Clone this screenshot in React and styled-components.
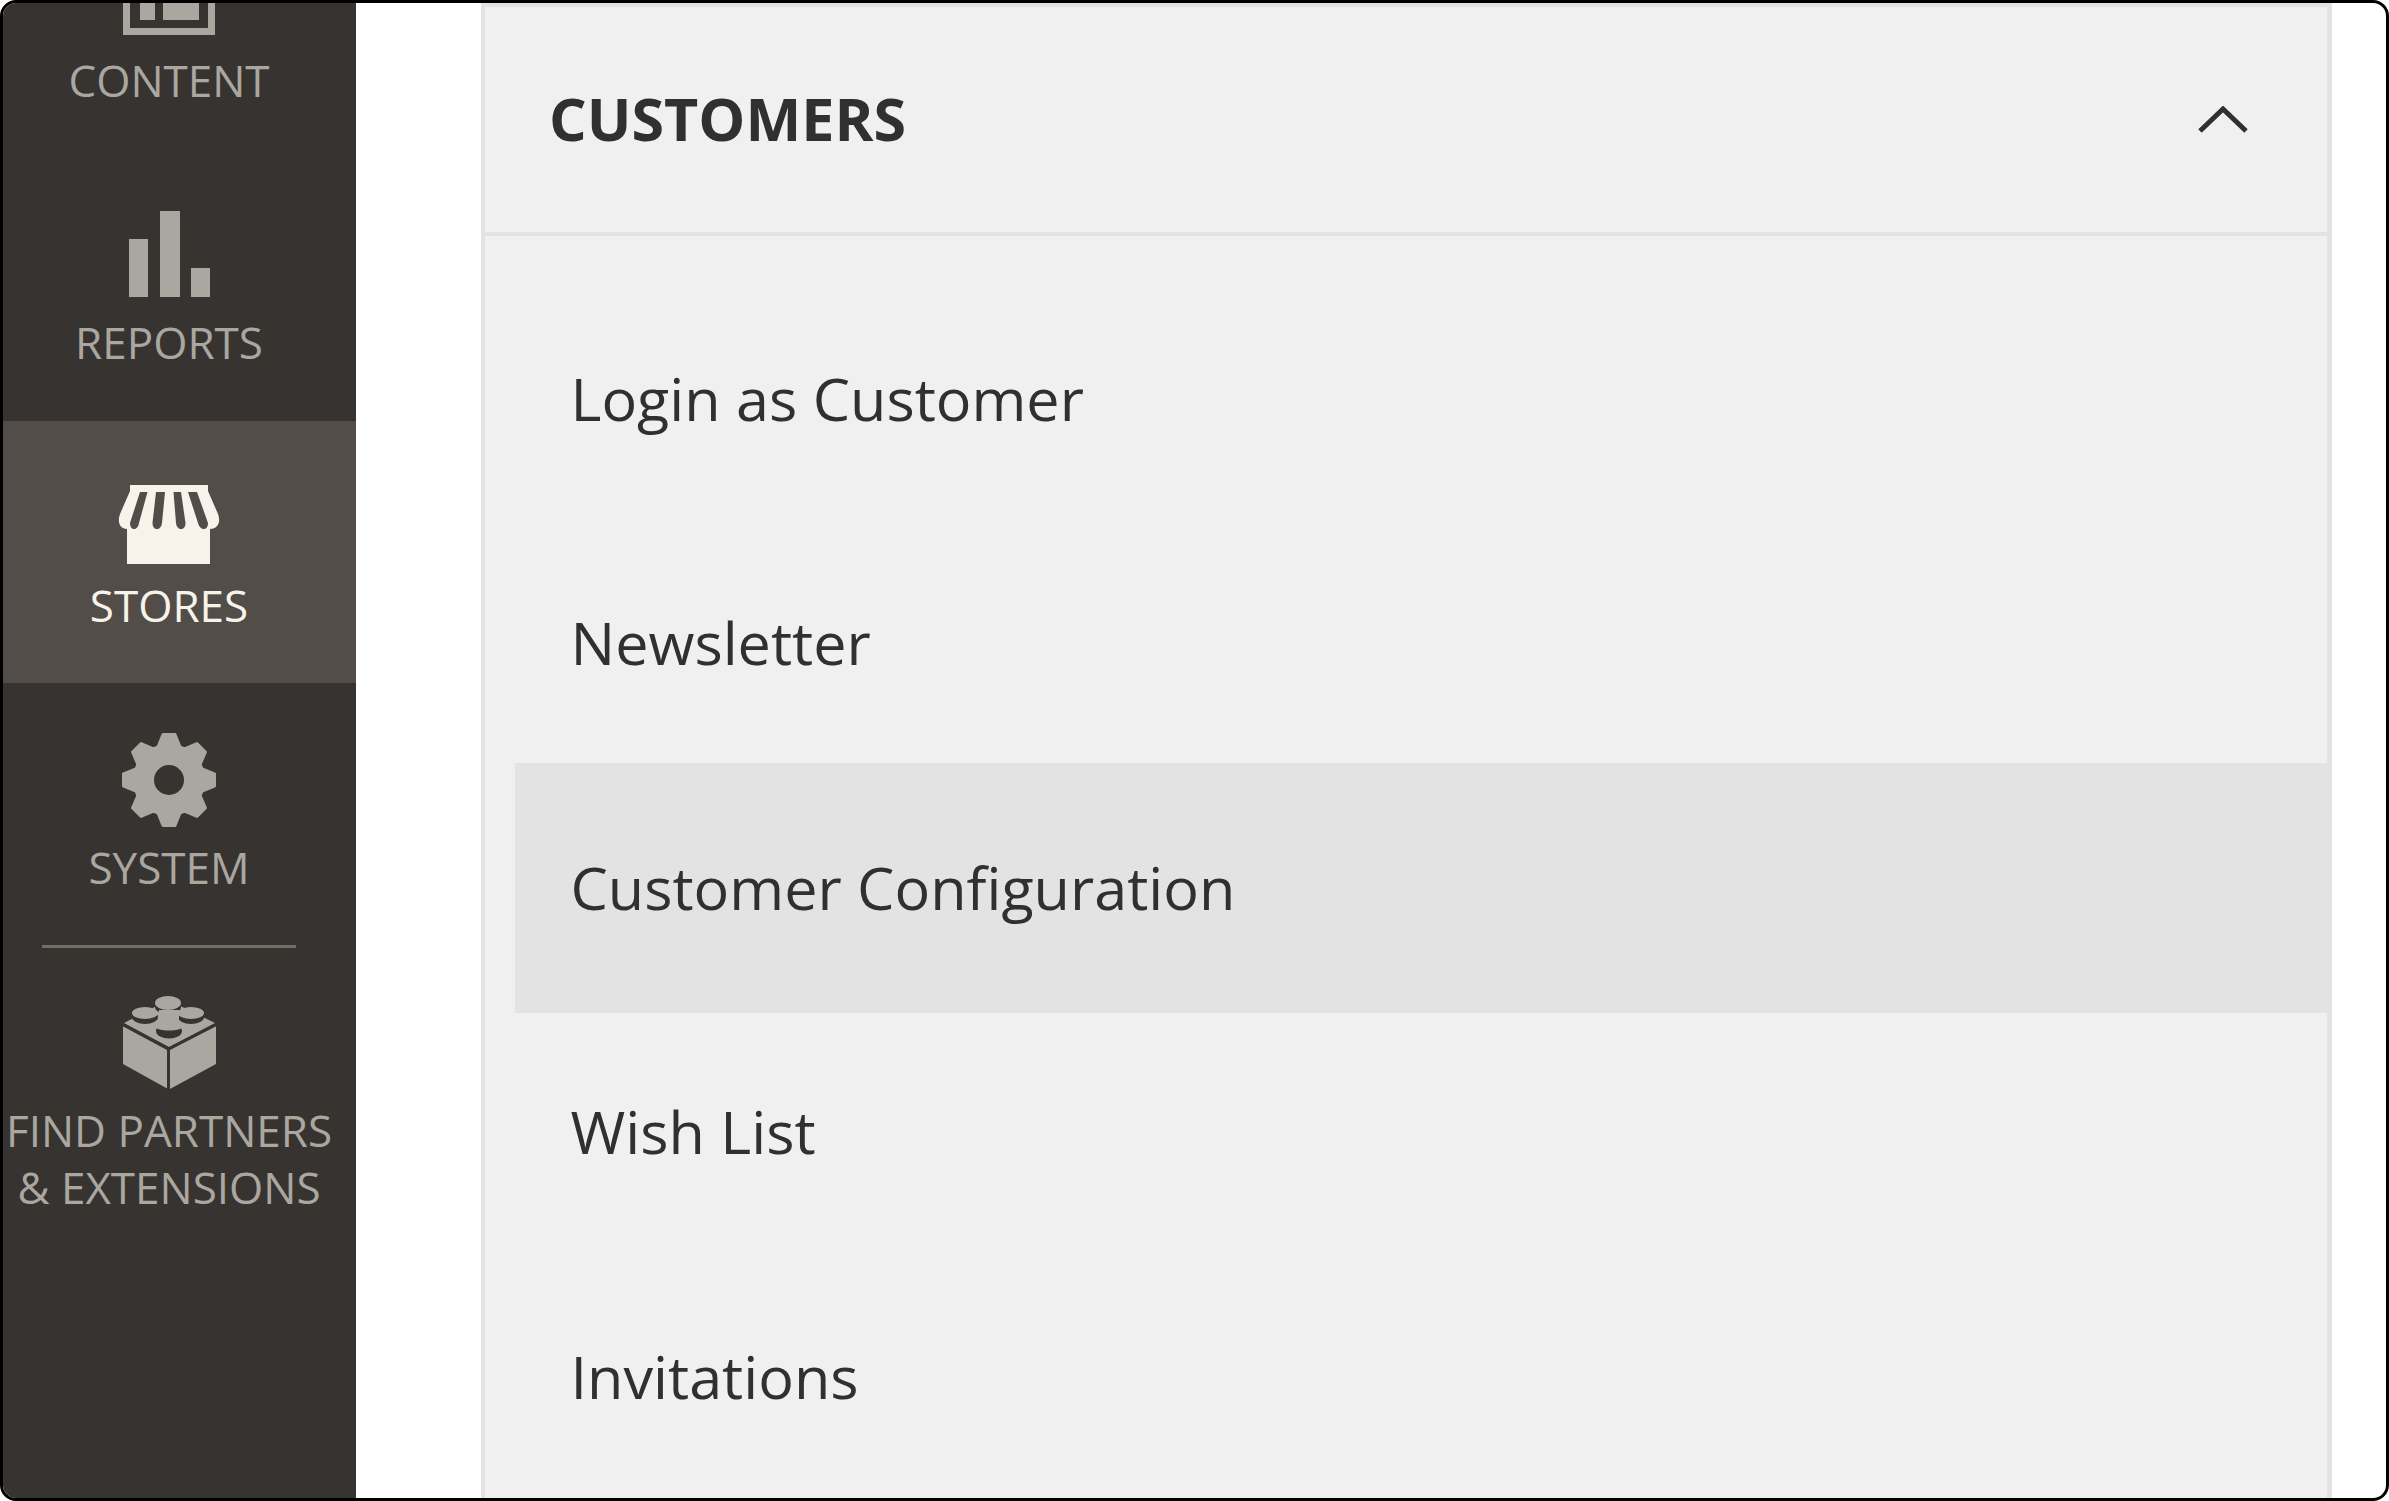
import styled, { createGlobalStyle } from "styled-components";

const GlobalStyle = createGlobalStyle`
  html, body {
    margin: 0;
    padding: 0;
    background: #fff;
  }
`;

const gearPath = () => {
  const cx = 47;
  const cy = 47;
  const pts = [];
  for (let i = 0; i < 8; i++) {
    const a = (i * Math.PI) / 4 - Math.PI / 2;
    const at = (r, off) => [
      cx + r * Math.cos(a) - off * Math.sin(a),
      cy + r * Math.sin(a) + off * Math.cos(a),
    ];
    pts.push(at(33, -11), at(45.5, -6), at(45.5, 6), at(33, 11));
  }
  return "M" + pts.map((p) => p.map((n) => n.toFixed(1)).join(" ")).join("L") + "Z";
};

function ContentIcon() {
  return (
    <IconSvg viewBox="0 0 120 100">
      <path d="M13 40h7v37h78V40h7v44H13z" />
      <path d="M13 0h7v40h-7zM98 0h7v40h-7z" />
      <rect x="30" y="40" width="15" height="29" />
      <rect x="53" y="40" width="36" height="29" />
    </IconSvg>
  );
}

function ReportsIcon() {
  return (
    <IconSvg viewBox="0 0 120 100">
      <rect x="19" y="26" width="19" height="58" />
      <rect x="50" y="-2" width="20" height="86" />
      <rect x="81" y="55" width="19" height="29" />
    </IconSvg>
  );
}

function StoresIcon() {
  return (
    <IconSvg viewBox="0 0 120 100">
      <path d="M20 9H98V15L108 38C111 46 108 53 100 53V88H17V53C10 53 7 46 10 38L20 15Z" />
      <g fill="#524d49">
        <path d="M30 16H37.5L29 47C28 55 20 55 20 47Z" />
        <path d="M46 16H55L52 47C51 55 42.5 55 42.5 47Z" />
        <path d="M63.5 16H71L75.5 47C75.5 55 67 55 66 47Z" />
        <path d="M78 16H87L98 47C98 55 90 55 88 47Z" />
      </g>
    </IconSvg>
  );
}

function SystemIcon() {
  return (
    <IconSvg viewBox="0 0 120 100">
      <g transform="translate(12 -5)">
        <path d={gearPath()} strokeWidth="3" strokeLinejoin="round" stroke="#aaa6a0" />
        <circle cx="47" cy="47" r="15" fill="#373330" />
      </g>
    </IconSvg>
  );
}

function PartnersIcon() {
  return (
    <IconSvg viewBox="0 0 120 100">
      <path d="M13 46L58 70V109L13 84Z" />
      <path d="M60 70L106 46V84L60 109Z" />
      <path d="M14 43L58 20L105 43L59 67Z" />
      <ellipse cx="35" cy="37" rx="13" ry="7" fill="#373330" />
      <ellipse cx="35" cy="33" rx="13" ry="6" />
      <ellipse cx="81" cy="37" rx="13" ry="7" fill="#373330" />
      <ellipse cx="81" cy="33" rx="13" ry="6" />
      <ellipse cx="58" cy="27" rx="13" ry="7" fill="#373330" />
      <ellipse cx="58" cy="23" rx="13" ry="7" />
      <ellipse cx="59" cy="51" rx="13" ry="7.5" fill="#373330" />
      <path d="M46 46H72V47C72 49 66 50.5 59 50.5C52 50.5 46 49 46 47ZM49 30H69V46H49Z" />
      <path d="M13 45L58 69L106 45" fill="none" stroke="#373330" strokeWidth="2.5" />
      <path d="M58.5 69V109" fill="none" stroke="#373330" strokeWidth="3" />
    </IconSvg>
  );
}

const navItems = [
  { key: "content", label: "CONTENT", icon: <ContentIcon /> },
  { key: "reports", label: "REPORTS", icon: <ReportsIcon /> },
  { key: "stores", label: "STORES", icon: <StoresIcon />, active: true },
];

const rows = ["Login as Customer", "Newsletter", "Customer Configuration", "Wish List", "Invitations"];

export default function App() {
  return (
    <>
      <GlobalStyle />
      <Frame>
        <Sidebar>
          {navItems.map((item) => (
            <NavItem key={item.key} $active={item.active}>
              <IconBox>{item.icon}</IconBox>
              <NavLabel>{item.label}</NavLabel>
            </NavItem>
          ))}
          <NavItem $height={262}>
            <IconBox>
              <SystemIcon />
            </IconBox>
            <NavLabel>SYSTEM</NavLabel>
          </NavItem>
          <Divider />
          <NavItem $top={32} $height={300}>
            <IconBox $height={122}>
              <PartnersIcon />
            </IconBox>
            <NavLabel>FIND PARTNERS</NavLabel>
            <NavLabel>&amp; EXTENSIONS</NavLabel>
          </NavItem>
        </Sidebar>
        <Panel>
          <PanelHeader>
            <PanelTitle>CUSTOMERS</PanelTitle>
            <Chevron viewBox="0 0 52 28">
              <path d="M3 25L26 3L49 25" />
            </Chevron>
          </PanelHeader>
          <List>
            {rows.map((row) => (
              <Row key={row} $active={row === "Customer Configuration"}>
                {row}
              </Row>
            ))}
          </List>
        </Panel>
      </Frame>
    </>
  );
}

const Frame = styled.div`
  box-sizing: border-box;
  width: 2389px;
  height: 1501px;
  display: flex;
  align-items: stretch;
  background: #fff;
  border: 3px solid #000;
  border-radius: 16px;
  overflow: hidden;
  font-family: "Open Sans", "Noto Sans", sans-serif;
`;

const Sidebar = styled.nav`
  flex: 0 0 353px;
  display: flex;
  flex-direction: column;
  background: #373330;
  margin-top: -107px;
`;

const NavItem = styled.div`
  box-sizing: border-box;
  flex: 0 0 ${(p) => p.$height || 262.3}px;
  padding: ${(p) => p.$top || 55}px 19px 0 0;
  display: flex;
  flex-direction: column;
  align-items: center;
  color: ${(p) => (p.$active ? "#f7f3eb" : "#aaa6a0")};
  background: ${(p) => (p.$active ? "#524d49" : "transparent")};
`;

const IconBox = styled.div`
  flex: 0 0 ${(p) => p.$height || 101}px;
  width: 120px;
`;

const IconSvg = styled.svg`
  display: block;
  width: 120px;
  height: 100px;
  overflow: visible;
  fill: currentColor;
`;

const NavLabel = styled.div`
  margin-right: 2px;
  font-size: 44px;
  line-height: 57px;
  white-space: nowrap;
  text-align: center;
`;

const Divider = styled.div`
  flex: 0 0 3px;
  width: 254px;
  margin-left: 39px;
  background: #736d66;
`;

const Panel = styled.section`
  box-sizing: border-box;
  flex: 0 0 1851px;
  margin-left: 125px;
  background: #f0f0f0;
  border: solid #e3e3e3;
  border-width: 4px 5px 0 4px;
  color: #303030;
`;

const PanelHeader = styled.header`
  box-sizing: content-box;
  height: 225px;
  padding: 0 78px 0 64px;
  display: flex;
  align-items: center;
  justify-content: space-between;
  border-bottom: 4px solid #e3e3e3;
`;

const PanelTitle = styled.h2`
  margin: -2px 0 0;
  font-size: 59.2px;
  line-height: 1;
  font-weight: 700;
`;

const Chevron = styled.svg`
  width: 52px;
  height: 28px;
  fill: none;
  stroke: #303030;
  stroke-width: 5;
`;

const List = styled.div`
  padding: 41px 0 0 30px;
  display: flex;
  flex-direction: column;
`;

const Row = styled.div`
  box-sizing: border-box;
  flex: 0 0 ${(p) => (p.$active ? 250 : 244.5)}px;
  margin: ${(p) => (p.$active ? "-2.75px 0" : "0")};
  padding: 0 0 2px 55.5px;
  display: flex;
  align-items: center;
  font-size: 59.3px;
  line-height: 1;
  background: ${(p) => (p.$active ? "#e3e3e3" : "transparent")};
`;
